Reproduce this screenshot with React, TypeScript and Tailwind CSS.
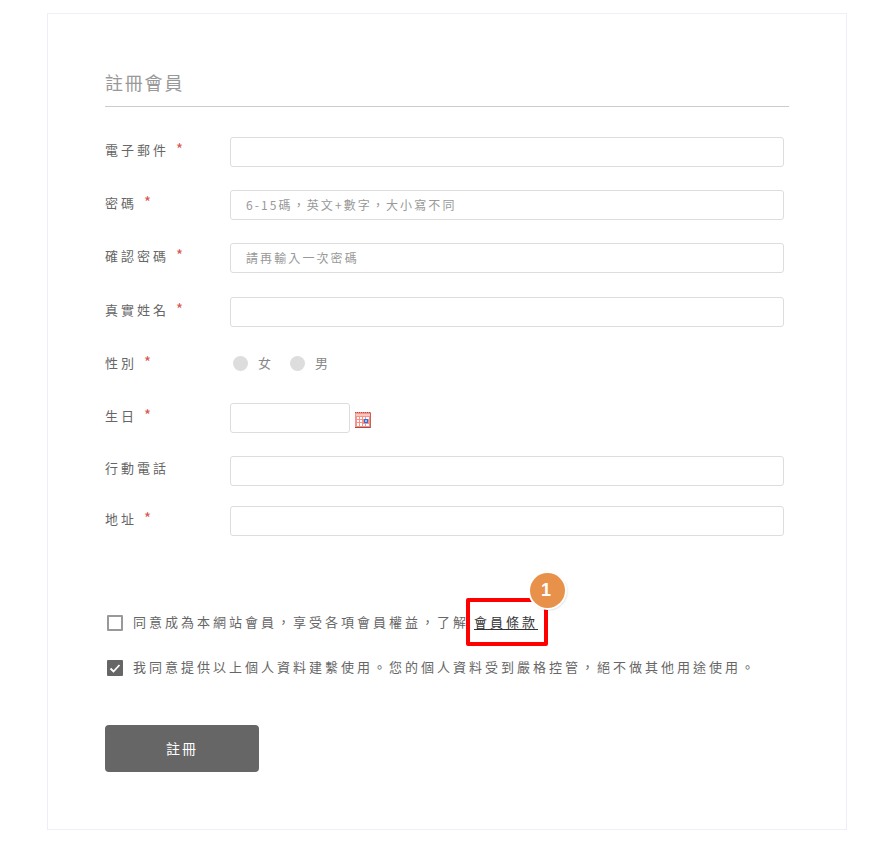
const labelClass = 'w-[125px] shrink-0 -mt-[6px] text-[13px] leading-[20px] tracking-[3px] text-[#666]'
const inputClass = 'h-[30px] rounded-[3px] border border-[#dddddd] bg-white px-[15px] pb-[2px] text-[12px] tracking-[2.1px] text-[#555] outline-none placeholder:text-[#999]'

function Label({ text, required }: { text: string; required?: boolean }) {
  return (
    <label className={labelClass}>
      {text}
      {required && <span className="ml-[7px] text-[15px] text-[#d9534f]">*</span>}
    </label>
  )
}

function TextRow({ label, required, placeholder, className }: { label: string; required?: boolean; placeholder?: string; className?: string }) {
  return (
    <div className={`flex h-[30px] items-center ${className ?? ''}`}>
      <Label text={label} required={required} />
      <input type="text" placeholder={placeholder} className={`${inputClass} w-[554px]`} />
    </div>
  )
}

function Radio({ label }: { label: string }) {
  return (
    <span className="flex items-center">
      <span className="h-[15px] w-[15px] rounded-full bg-[#dddddd]" />
      <span className="ml-[10px] text-[13px] tracking-[2px] text-[#888]">{label}</span>
    </span>
  )
}

function CalendarIcon() {
  return (
    <svg width="16" height="16" viewBox="0 0 16 16" className="ml-[5px] mt-[4px] shrink-0">
      <rect x="0" y="0" width="16" height="16" fill="#f4938a" />
      <path d="M0 0.5H16" stroke="#a8524c" strokeWidth="1" strokeDasharray="1 1" />
      <rect x="0" y="15" width="16" height="1" fill="#a94a46" />
      <rect x="15" y="1" width="1" height="15" fill="#c0645e" />
      <rect x="1" y="2" width="14" height="2" fill="#fbc4bd" />
      <g fill="#ffffff">
        <rect x="2" y="5" width="2" height="2" />
        <rect x="5" y="5" width="2" height="2" />
        <rect x="8" y="5" width="2" height="2" />
        <rect x="11" y="5" width="3" height="2" />
        <rect x="2" y="8" width="2" height="2" />
        <rect x="5" y="8" width="2" height="2" />
        <rect x="2" y="11" width="2" height="3" />
        <rect x="5" y="11" width="2" height="3" />
        <rect x="8" y="12" width="2" height="2" />
        <rect x="11" y="12" width="3" height="2" />
      </g>
      <rect x="9.5" y="7.5" width="3" height="3" fill="#9cc2f5" stroke="#2f6fd8" strokeWidth="1" />
    </svg>
  )
}

export default function App() {
  return (
    <div className="min-h-[842px] bg-white pl-[47px] pt-[13px] font-['Noto_Sans_CJK_TC','Noto_Sans',sans-serif]">
      <div className="h-[817px] w-[800px] border border-[#eeeef8] px-[57px] pt-[56px]">
        <h2 className="w-[684px] border-b border-[#cccccc] pb-[12px] text-[18px] leading-[24px] tracking-[1.8px] text-[#999] font-normal">
          註冊會員
        </h2>

        <form className="mt-[30px] flex flex-col">
          <TextRow label="電子郵件" required />
          <TextRow label="密碼" required placeholder="6-15碼，英文+數字，大小寫不同" className="mt-[23px]" />
          <TextRow label="確認密碼" required placeholder="請再輸入一次密碼" className="mt-[23px]" />
          <TextRow label="真實姓名" required className="mt-[24px]" />

          <div className="mt-[23px] flex h-[30px] items-center">
            <Label text="性別" required />
            <div className="-mt-[4px] ml-[3px] flex gap-[17px]">
              <Radio label="女" />
              <Radio label="男" />
            </div>
          </div>

          <div className="mt-[23px] flex h-[30px] items-center">
            <Label text="生日" required />
            <input type="text" className={`${inputClass} w-[120px]`} />
            <CalendarIcon />
          </div>

          <TextRow label="行動電話" className="mt-[23px]" />
          <TextRow label="地址" required className="mt-[20px]" />

          <div className="mt-[79px] flex h-[16px] items-center pl-[2px]">
            <span className="h-[16px] w-[16px] shrink-0 rounded-[1px] border-2 border-[#999]" />
            <span className="ml-[10px] -mt-[2px] whitespace-nowrap text-[13px] tracking-[3px] text-[#666]">
              同意成為本網站會員，享受各項會員權益，了解
            </span>
            <span className="relative ml-[5px] -mt-[2px] whitespace-nowrap text-[13px] tracking-[3px] text-[#333] underline underline-offset-2">
              會員條款
              <span className="absolute -left-[8px] -top-[14px] h-[48px] w-[82px] rounded-[2px] border-4 border-[#ff0000]" />
              <span className="absolute -top-[39px] left-[56px] flex h-[35px] w-[35px] items-center justify-center rounded-full bg-[#e8914a] text-[18px] font-bold text-white no-underline ring-2 ring-white shadow-[1px_1px_3px_rgba(0,0,0,0.4)] font-['Liberation_Sans',sans-serif]">
                1
              </span>
            </span>
          </div>

          <div className="mt-[29px] flex h-[16px] items-center pl-[2px]">
            <span className="flex h-[16px] w-[16px] shrink-0 items-center justify-center rounded-[1px] bg-[#666]">
              <svg width="14" height="14" viewBox="0 0 14 14" fill="none" stroke="#ffffff" strokeWidth="1.8">
                <path d="M2.5 7.5 L5.5 10.5 L11.5 4" />
              </svg>
            </span>
            <span className="ml-[10px] -mt-[2px] whitespace-nowrap text-[13px] tracking-[3px] text-[#666]">
              我同意提供以上個人資料建繫使用。您的個人資料受到嚴格控管，絕不做其他用途使用。
            </span>
          </div>

          <button type="button" className="mt-[49px] h-[47px] w-[154px] rounded-[4px] bg-[#666666] text-[14px] tracking-[2px] text-white">
            註冊
          </button>
        </form>
      </div>
    </div>
  )
}
